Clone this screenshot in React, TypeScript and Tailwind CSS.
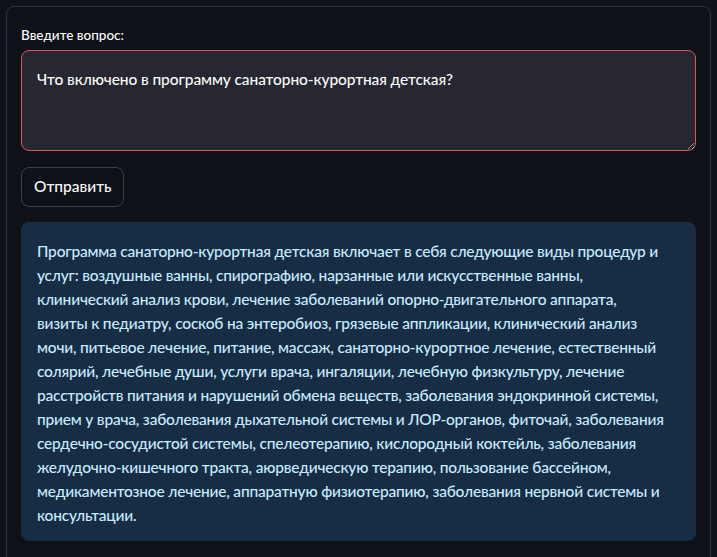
import { useState } from 'react'

const answerLines = [
  'Программа санаторно-курортная детская включает в себя следующие виды процедур и',
  'услуг: воздушные ванны, спирографию, нарзанные или искусственные ванны,',
  'клинический анализ крови, лечение заболеваний опорно-двигательного аппарата,',
  'визиты к педиатру, соскоб на энтеробиоз, грязевые аппликации, клинический анализ',
  'мочи, питьевое лечение, питание, массаж, санаторно-курортное лечение, естественный',
  'солярий, лечебные души, услуги врача, ингаляции, лечебную физкультуру, лечение',
  'расстройств питания и нарушений обмена веществ, заболевания эндокринной системы,',
  'прием у врача, заболевания дыхательной системы и ЛОР-органов, фиточай, заболевания',
  'сердечно-сосудистой системы, спелеотерапию, кислородный коктейль, заболевания',
  'желудочно-кишечного тракта, аюрведическую терапию, пользование бассейном,',
  'медикаментозное лечение, аппаратную физиотерапию, заболевания нервной системы и',
  'консультации.',
]

export default function App() {
  const [question, setQuestion] = useState('Что включено в программу санаторно-курортная детская?')

  return (
    <div className="h-[557px] overflow-hidden bg-[#0e1117] pt-[6px] px-[6px] font-['Lato','Noto_Sans',sans-serif] font-medium">
      <div className="h-[600px] rounded-lg border border-[#31333f] px-[14px] pt-[19px]">
        {/* Question form */}
        <label className="block text-[13.5px] leading-[18px] text-[#fafafa] mb-[6px]">Введите вопрос:</label>
        <textarea
          value={question}
          onChange={e => setQuestion(e.target.value)}
          className="block w-full h-[101px] rounded-lg border border-[#e0535d] bg-[#262730] px-[15px] pt-[16px] text-[15.5px] tracking-[-0.1px] leading-[24px] text-[#fafafa] outline-none resize-y"
        />
        <button className="mt-[16px] h-[40px] rounded-lg border border-[#3c3e48] bg-[#0e1117] px-[12px] text-[15.5px] text-[#fafafa]">
          Отправить
        </button>

        {/* Answer */}
        <div className="mt-[15px] rounded-lg bg-[#172d43] px-[16px] pt-[17px] pb-[14px] text-[15.5px] tracking-[-0.2px] leading-[24px] text-[#c7ebff]">
          {answerLines.map((line, i) => (
            <div key={i} className="whitespace-nowrap">{line}</div>
          ))}
        </div>
      </div>
    </div>
  )
}
